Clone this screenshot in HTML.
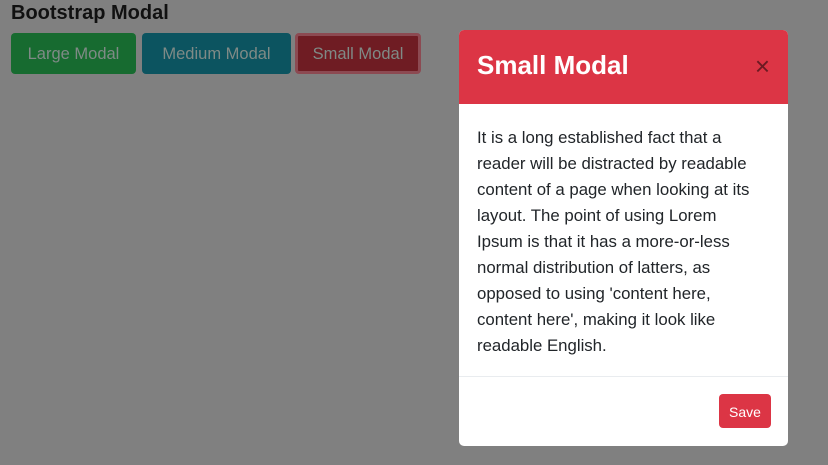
<!DOCTYPE html>
<html><head><style>
body{margin:0;width:828px;height:465px;background:#808080;font-family:"Liberation Sans",sans-serif;position:relative;overflow:hidden}
h1{position:absolute;left:11px;top:0;margin:0;font-size:20px;font-weight:bold;color:#111;line-height:26px}
.b{position:absolute;top:33px;height:41px;border-radius:4px;color:#7f8a86;font-size:16.5px;line-height:43px;text-align:center;box-sizing:border-box}
.modal{position:absolute;left:459px;top:30px;width:329px;height:416px;background:#fff;border-radius:5px;overflow:hidden}
.hd{height:74px;background:#dc3545;position:relative}
.hd span{position:absolute;left:18px;top:20px;color:#fff;font-size:26px;font-weight:bold}
.x{position:absolute;right:18px;top:21px;color:#6b1a22;font-size:26px}
.bd{padding:21px 18px 0;font-size:16.8px;line-height:26px;color:#212529;white-space:nowrap;height:251px}
.ft{border-top:1px solid #e9ecef;position:relative;height:70px}
.save{position:absolute;right:17px;top:17px;width:52px;height:34px;background:#dc3545;color:#fff;border-radius:4px;font-size:14px;line-height:36px;text-align:center}
</style></head><body>
<h1>Bootstrap Modal</h1>
<div class="b" style="left:11px;width:125px;background:#176b30">Large Modal</div>
<div class="b" style="left:142px;width:149px;background:#0c5460">Medium Modal</div>
<div class="b" style="left:295px;width:126px;background:#6f1c23;border:3px solid #8c4a52;line-height:37px">Small Modal</div>
<div class="modal">
<div class="hd"><span>Small Modal</span><div class="x">×</div></div>
<div class="bd">It is a long established fact that a<br>reader will be distracted by readable<br>content of a page when looking at its<br>layout. The point of using Lorem<br>Ipsum is that it has a more-or-less<br>normal distribution of latters, as<br>opposed to using 'content here,<br>content here', making it look like<br>readable English.</div>
<div class="ft"><div class="save">Save</div></div>
</div>
</body></html>
